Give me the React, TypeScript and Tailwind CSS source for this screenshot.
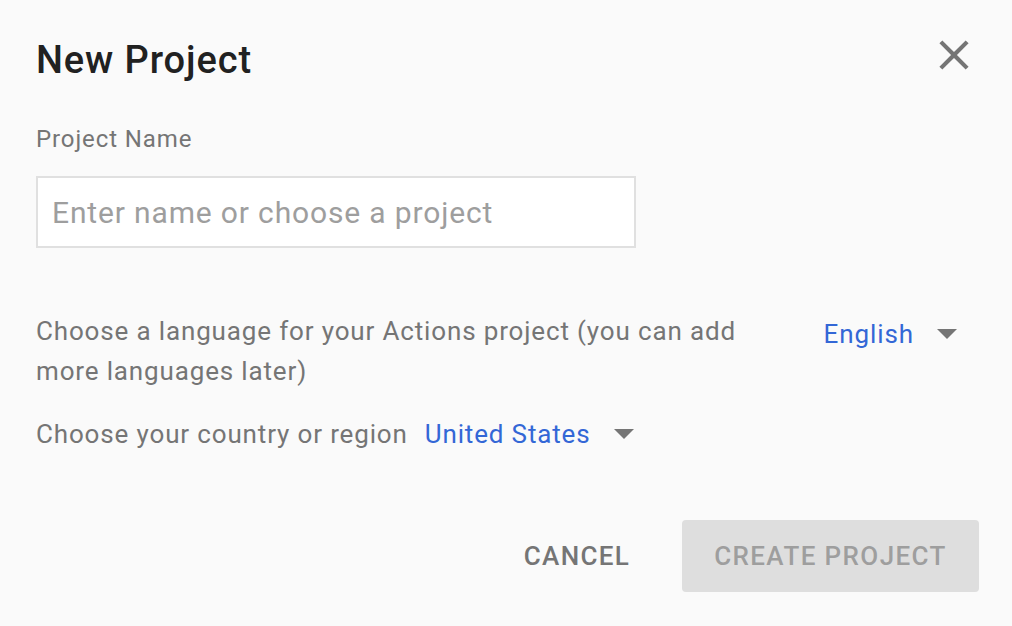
import React, { useState } from 'react';

const Caret: React.FC = () => (
  <svg width="20" height="10" viewBox="0 0 20 10" className="shrink-0">
    <path d="M0 0h20L10 10z" fill="#757575" />
  </svg>
);

export default function App() {
  const [name, setName] = useState('');

  return (
    <div className="w-[1012px] h-[626px] bg-[#fafafa] font-['Roboto',sans-serif] overflow-hidden">
      <div className="pl-[36px] pr-[33px] pt-[34px]">
        <div className="flex items-start justify-between">
          <h1 className="text-[38px] leading-[52px] font-medium text-[#212121] tracking-[0.9px]">New Project</h1>
          <button type="button" className="mt-[-4px] text-[#757575]" aria-label="Close">
            <svg width="50" height="50" viewBox="0 0 24 24">
              <path
                fill="currentColor"
                d="M19 6.41 17.59 5 12 10.59 6.41 5 5 6.41 10.59 12 5 17.59 6.41 19 12 13.41 17.59 19 19 17.59 13.41 12z"
              />
            </svg>
          </button>
        </div>

        <label htmlFor="pname" className="block mt-[37px] text-[24px] leading-[32px] text-[#757575] tracking-[0.9px]">
          Project Name
        </label>
        <input
          id="pname"
          value={name}
          onChange={e => setName(e.target.value)}
          placeholder="Enter name or choose a project"
          className="mt-[21px] block w-[600px] h-[72px] bg-white border-2 border-[#e0e0e0] px-[14px] text-[30px] tracking-[0.85px] text-[#212121] placeholder-[#9e9e9e] outline-none"
        />

        <div className="mt-[63px] flex items-start justify-between">
          <p className="w-[750px] text-[26px] leading-[40px] text-[#757575] tracking-[0.85px]">
            Choose a language for your Actions project (you can add more languages later)
          </p>
          <div className="flex items-center gap-[23px] mr-[22px] mt-[3px]">
            <span className="text-[26px] leading-[40px] text-[#3367d6] tracking-[0.9px]">English</span>
            <Caret />
          </div>
        </div>

        <div className="mt-[23px] flex items-center">
          <span className="text-[26px] leading-[40px] text-[#757575] tracking-[0.85px]">Choose your country or region</span>
          <span className="ml-[17px] text-[26px] leading-[40px] text-[#3367d6] tracking-[0.85px]">United States</span>
          <span className="ml-[23px]">
            <Caret />
          </span>
        </div>

        <div className="mt-[66px] flex items-center justify-end gap-[52px]">
          <button type="button" className="text-[26px] font-medium text-[#757575] tracking-[1.3px]">
            CANCEL
          </button>
          <button
            type="button"
            disabled
            className="w-[297px] h-[72px] rounded-[4px] bg-[#dedede] text-[26px] font-medium text-[#9e9e9e] tracking-[1.4px]"
          >
            CREATE PROJECT
          </button>
        </div>
      </div>
    </div>
  );
}
